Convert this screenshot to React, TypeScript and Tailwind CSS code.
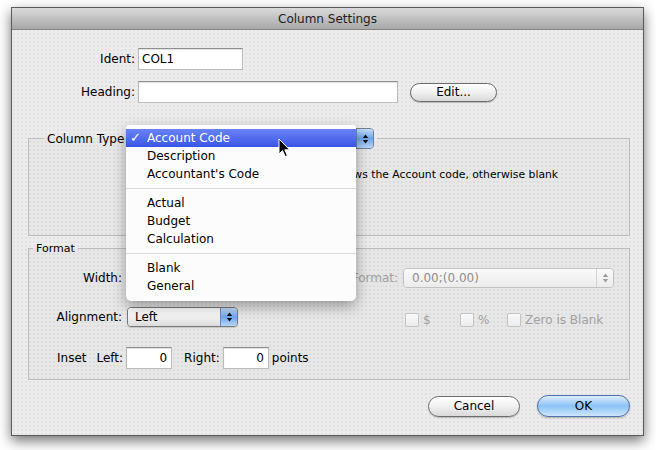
import React from "react";

function Arrows({ color = "#111" }: { color?: string }) {
  return (
    <svg width="7" height="12" viewBox="0 0 7 12">
      <path d="M3.5 1.5 L6.2 5 H0.8 Z" fill={color} />
      <path d="M3.5 10.5 L6.2 7 H0.8 Z" fill={color} />
    </svg>
  );
}

function TextField({ className, children, right }: { className: string; children?: React.ReactNode; right?: boolean }) {
  return (
    <div
      className={
        "h-[22px] bg-white border border-[#bcbcbc] border-t-[#8e8e8e] shadow-[inset_0_1px_1px_rgba(0,0,0,0.12)] flex items-center px-[3px] text-[12px] " +
        (right ? "justify-end pr-[4px] " : "") +
        className
      }
    >
      {children}
    </div>
  );
}

function Checkbox({ label }: { label: string }) {
  return (
    <div className="flex items-center">
      <div className="w-[14px] h-[14px] rounded-[2px] border border-[#c4c4c4] bg-linear-to-b from-[#fafafa] to-[#ececec]" />
      <span className="ml-[4px] text-[#a2a2a2] text-[12px]">{label}</span>
    </div>
  );
}

function MenuItem({ label, checked, active }: { label: string; checked?: boolean; active?: boolean }) {
  return (
    <div
      className={
        "h-[18px] flex items-center text-[12px] " +
        (active ? "bg-linear-to-b from-[#6b82f5] to-[#3a55e7] text-white" : "text-black")
      }
    >
      <span className="w-[21px] pl-[4px] text-[13px] font-bold leading-[18px]">{checked ? "✓" : ""}</span>
      <span>{label}</span>
    </div>
  );
}

function Separator() {
  return (
    <div className="h-[11px] flex items-center">
      <div className="h-px w-full bg-[#dadada]" />
    </div>
  );
}

export default function App() {
  return (
    <div className="w-[656px] h-[450px] bg-white pt-[7px] pl-[11px] font-['DejaVu_Sans','Liberation_Sans',sans-serif] text-[12px] text-black">
      <div className="relative w-[633px] h-[429px] border border-[#5a5a5a] bg-[#ececec] bg-[radial-gradient(circle,#dcdcdc_0.6px,transparent_0.9px)] bg-[length:4px_4px] shadow-[0_5px_12px_rgba(0,0,0,0.55)] flex flex-col">
        {/* Title bar */}
        <div className="h-[22px] shrink-0 border-b border-[#858585] bg-linear-to-b from-[#dadada] to-[#a8a8a8] flex items-center justify-center text-[12px] text-[#1c1c1c]">
          Column Settings
        </div>

        <div className="flex flex-col pt-[18px]">
          {/* Ident */}
          <div className="flex items-center h-[22px]">
            <div className="w-[123px] text-right">Ident:</div>
            <TextField className="ml-[3px] w-[105px]">COL1</TextField>
          </div>

          {/* Heading */}
          <div className="flex items-center h-[22px] mt-[11px]">
            <div className="w-[123px] text-right">Heading:</div>
            <TextField className="ml-[3px] w-[260px]" />
            <div className="ml-[12px] w-[87px] h-[19px] rounded-full border border-[#6c6c6c] bg-linear-to-b from-white via-[#f0f0f0] to-[#d9d9d9] shadow-[0_1px_1px_rgba(0,0,0,0.2)] flex items-center justify-center text-[12px]">
              Edit...
            </div>
          </div>

          {/* Column Type group */}
          <fieldset className="mt-[25px] ml-[16px] w-[602px] h-[108px] border border-[#bdbdbd] bg-black/[0.02]">
            <legend className="ml-[15px] px-[3px] flex items-center">
              <span>Column Type</span>
              <div className="ml-[4px] flex h-[21px] w-[246px] rounded-[4px] border border-[#6f7f9a] overflow-hidden">
                <div className="flex-1 flex items-center pl-[7px] bg-linear-to-b from-white via-[#f2f2f2] to-[#dcdcdc]">
                  Account Code
                </div>
                <div className="w-[17px] flex items-center justify-center border-l border-[#6a8cc4] bg-linear-to-b from-[#c6defa] via-[#6ea4ea] to-[#b6d5f8]">
                  <Arrows />
                </div>
              </div>
            </legend>
            <div className="pt-[19px] ml-[304px] text-[10.8px] leading-[14px] whitespace-nowrap">
              Shows the Account code, otherwise blank
            </div>
          </fieldset>

          {/* Format group */}
          <fieldset className="mt-[6px] ml-[16px] w-[602px] h-[138px] border border-[#bdbdbd] bg-black/[0.02]">
            <legend className="ml-[4px] px-[3px] text-[11px] leading-[13px]">Format</legend>

            {/* Width / Format */}
            <div className="mt-[13px] flex items-center h-[20px] pr-[15px]">
              <div className="w-[93px] text-right">Width:</div>
              <TextField className="ml-[5px] w-[60px]" />
              <div className="flex-1" />
              <div className="text-[#a0a0a0]">Format:</div>
              <div className="ml-[5px] flex h-[20px] w-[211px] rounded-[4px] border border-[#c2c2c2] overflow-hidden">
                <div className="flex-1 flex items-center pl-[8px] text-[#8f8f8f] bg-linear-to-b from-[#fafafa] to-[#ececec]">
                  0.00;(0.00)
                </div>
                <div className="w-[17px] flex items-center justify-center border-l border-[#d4d4d4] bg-linear-to-b from-[#fafafa] to-[#ececec]">
                  <Arrows color="#9a9a9a" />
                </div>
              </div>
            </div>

            {/* Alignment */}
            <div className="mt-[19px] flex items-center h-[20px]">
              <div className="w-[93px] text-right">Alignment:</div>
              <div className="ml-[5px] flex h-[20px] w-[111px] rounded-[4px] border border-[#7a7a7a] overflow-hidden shadow-[0_1px_1px_rgba(0,0,0,0.15)]">
                <div className="flex-1 flex items-center pl-[7px] bg-linear-to-b from-white via-[#f2f2f2] to-[#dcdcdc]">
                  Left
                </div>
                <div className="w-[17px] flex items-center justify-center border-l border-[#6a8cc4] bg-linear-to-b from-[#c6defa] via-[#6ea4ea] to-[#b6d5f8]">
                  <Arrows />
                </div>
              </div>
              <div className="ml-[167px] mt-[6px] flex items-center">
                <div className="w-[55px]">
                  <Checkbox label="$" />
                </div>
                <div className="w-[47px]">
                  <Checkbox label="%" />
                </div>
                <Checkbox label="Zero is Blank" />
              </div>
            </div>

            {/* Inset */}
            <div className="mt-[20px] flex items-center h-[22px] pl-[28px]">
              <span>Inset</span>
              <span className="ml-[10px]">Left:</span>
              <TextField className="ml-[3px] w-[46px]" right>
                0
              </TextField>
              <span className="ml-[12px]">Right:</span>
              <TextField className="ml-[3px] w-[46px]" right>
                0
              </TextField>
              <span className="ml-[3px]">points</span>
            </div>
          </fieldset>

          {/* Buttons */}
          <div className="mt-[15px] flex items-center justify-end pr-[13px] gap-[17px]">
            <div className="w-[92px] h-[21px] rounded-full border border-[#6c6c6c] bg-linear-to-b from-white via-[#f0f0f0] to-[#d9d9d9] shadow-[0_1px_1px_rgba(0,0,0,0.2)] flex items-center justify-center">
              Cancel
            </div>
            <div className="w-[93px] h-[22px] rounded-full border border-[#4f72a8] bg-linear-to-b from-[#dcedfd] via-[#8cc2f4] to-[#cde6fc] shadow-[0_1px_2px_rgba(0,0,0,0.25)] flex items-center justify-center">
              OK
            </div>
          </div>
        </div>

        {/* Popup menu */}
        <div className="absolute left-[114px] top-[117px] w-[230px] h-[176px] bg-[#fcfcfc] rounded-b-[5px] rounded-t-[3px] shadow-[0_5px_14px_rgba(0,0,0,0.35)] pt-[4px]">
          <MenuItem label="Account Code" checked active />
          <MenuItem label="Description" />
          <MenuItem label="Accountant's Code" />
          <Separator />
          <MenuItem label="Actual" />
          <MenuItem label="Budget" />
          <MenuItem label="Calculation" />
          <Separator />
          <MenuItem label="Blank" />
          <MenuItem label="General" />
        </div>

        {/* Cursor */}
        <svg className="absolute left-[266px] top-[130px]" width="13" height="20" viewBox="0 0 13 20">
          <path d="M1 1 L1 16 L4.5 12.6 L7.2 18.6 L9.4 17.6 L6.8 11.8 L11.6 11.8 Z" fill="#000" stroke="#fff" strokeWidth="1" />
        </svg>
      </div>
    </div>
  );
}
